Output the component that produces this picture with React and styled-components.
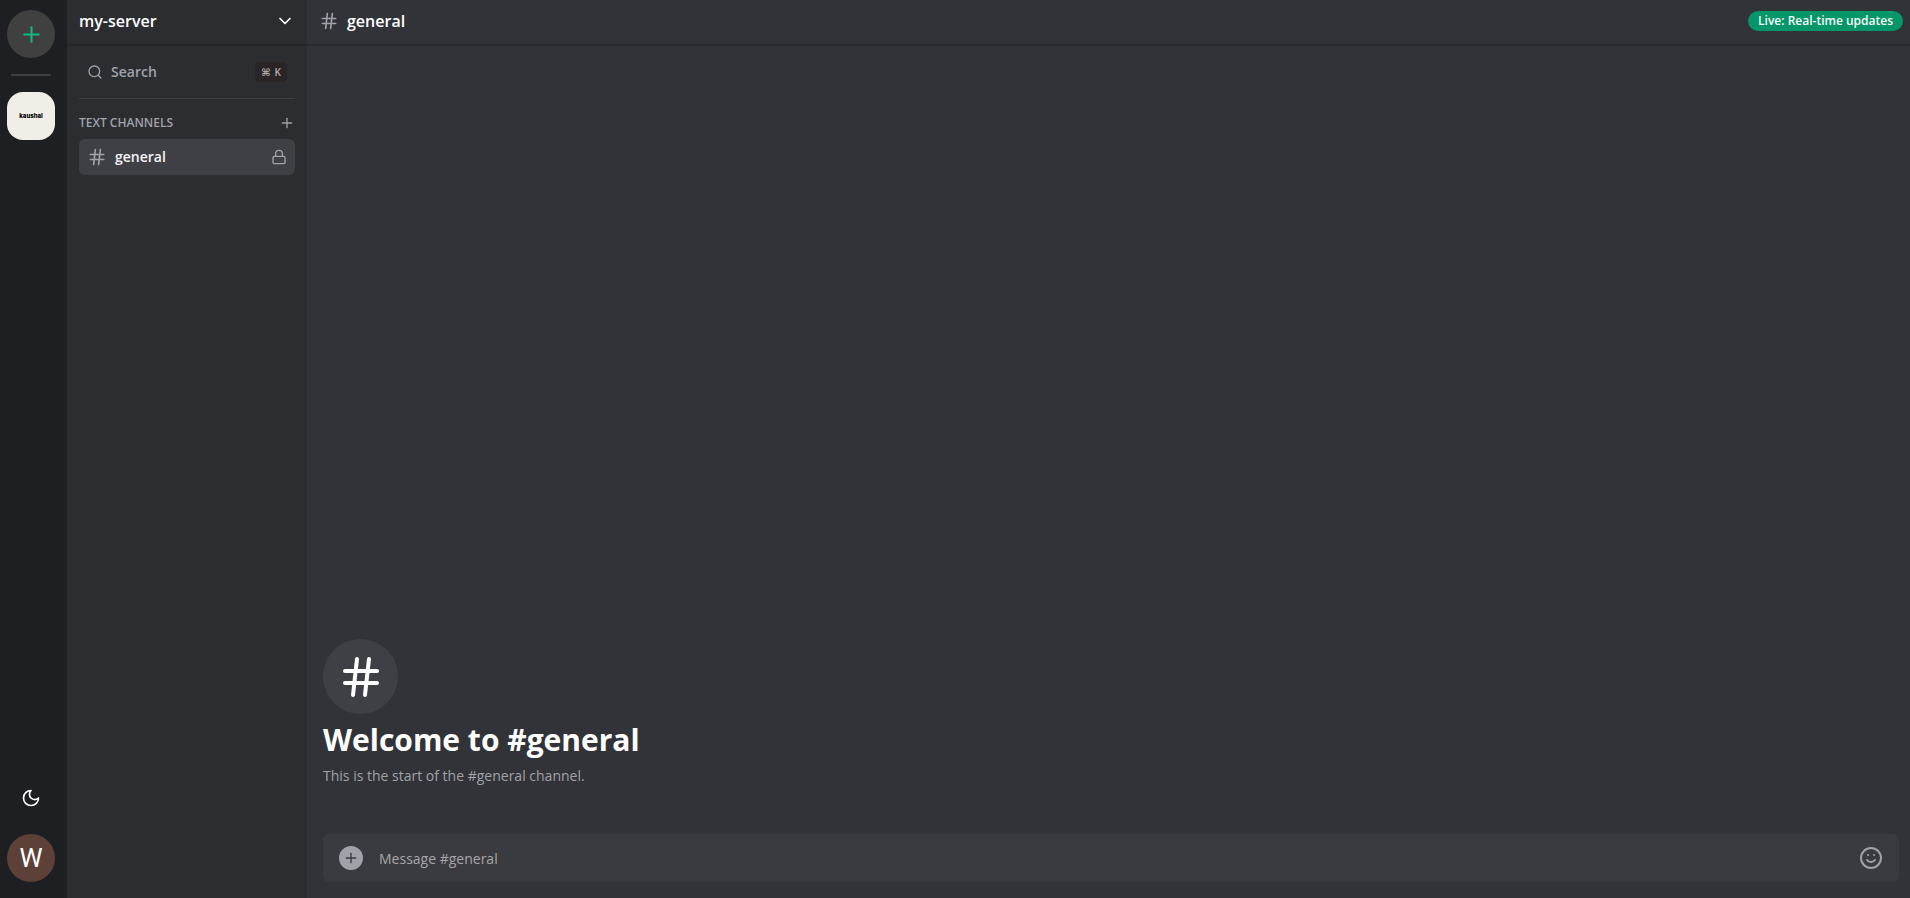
import React from "react";
import styled, { createGlobalStyle } from "styled-components";
import { ChevronDown, Hash, Lock, Plus, Search, Smile } from "lucide-react";

const GlobalStyle = createGlobalStyle`
  * {
    box-sizing: border-box;
  }

  body {
    margin: 0;
    font-family: "Open Sans", "Noto Sans", sans-serif;
    background-color: #313338;
  }

  button,
  input {
    font-family: inherit;
    border: none;
    padding: 0;
    background: none;
    outline: none;
  }

  button {
    cursor: pointer;
  }

  svg {
    display: block;
    flex-shrink: 0;
  }
`;

const Layout = styled.div`
  display: flex;
  height: 100vh;
`;

const Rail = styled.nav`
  display: flex;
  flex-direction: column;
  align-items: center;
  flex: 0 0 67px;
  padding: 10px 5px 16px 0;
  background-color: #1e1f22;
`;

const AddServer = styled.button`
  display: flex;
  align-items: center;
  justify-content: center;
  width: 48px;
  height: 48px;
  border-radius: 24px;
  background-color: #404040;
  color: #10b981;
`;

const RailDivider = styled.div`
  width: 40px;
  height: 2px;
  margin: 16px 0;
  border-radius: 1px;
  background-color: #3f3f46;
`;

const ServerIcon = styled.button`
  width: 48px;
  height: 48px;
  border-radius: 16px;
  background-color: #f0eee6;
  color: #000000;
  font-family: "Inter", sans-serif;
  font-size: 6px;
  line-height: 12px;
  font-weight: 800;
`;

const RailFooter = styled.div`
  display: flex;
  flex-direction: column;
  align-items: center;
  gap: 16px;
  margin-top: auto;
`;

const ThemeToggle = styled.button`
  display: flex;
  align-items: center;
  justify-content: center;
  width: 40px;
  height: 40px;
  color: #ffffff;
`;

const Avatar = styled.button`
  width: 48px;
  height: 48px;
  border-radius: 50%;
  background-color: #5d4037;
  color: #ffffff;
  font-family: Roboto, sans-serif;
  font-size: 26px;
  line-height: 48px;
`;

const Sidebar = styled.aside`
  flex: 0 0 240px;
  background-color: #2b2d31;
`;

const ServerHeader = styled.button`
  display: flex;
  align-items: center;
  justify-content: space-between;
  width: 100%;
  height: 46px;
  padding: 0 12px 2px;
  border-bottom: 2px solid #26272b;
  color: #ffffff;
  font-size: 16px;
  line-height: 24px;
  font-weight: 600;
`;

const SidebarBody = styled.div`
  padding: 8px 12px;
`;

const SearchButton = styled.button`
  display: flex;
  align-items: center;
  gap: 8px;
  width: 100%;
  height: 36px;
  padding: 0 8px;
  color: #a1a1aa;
  font-size: 14px;
  line-height: 20px;
  font-weight: 600;
`;

const Shortcut = styled.kbd`
  display: flex;
  align-items: center;
  gap: 4px;
  height: 20px;
  margin-left: auto;
  padding: 0 6px;
  border-radius: 4px;
  background-color: #292524;
  color: #b4b0ae;
  font-family: "Open Sans", "DejaVu Sans", sans-serif;
  font-size: 10px;
  line-height: 20px;
`;

const Separator = styled.hr`
  height: 1px;
  margin: 8px 0;
  border: none;
  background-color: #3f3f46;
`;

const SectionHeader = styled.div`
  display: flex;
  align-items: center;
  justify-content: space-between;
  height: 32px;
  color: #a1a1aa;

  button {
    color: inherit;
  }
`;

const SectionTitle = styled.h2`
  margin: 0;
  font-size: 12px;
  line-height: 16px;
  font-weight: 600;
  text-transform: uppercase;
`;

const Channel = styled.button`
  display: flex;
  align-items: center;
  gap: 8px;
  width: 100%;
  height: 36px;
  padding: 0 8px;
  border-radius: 6px;
  background-color: #3f4045;
  color: #a1a1aa;

  span {
    flex: 1;
    color: #f4f4f5;
    font-size: 14px;
    line-height: 20px;
    font-weight: 600;
    text-align: left;
  }
`;

const Main = styled.main`
  display: flex;
  flex: 1;
  flex-direction: column;
  min-width: 0;
`;

const ChannelHeader = styled.header`
  display: flex;
  align-items: center;
  gap: 8px;
  height: 46px;
  padding: 0 7px 2px 12px;
  border-bottom: 2px solid #2a2b2f;
  color: #a1a1aa;

  h1 {
    margin: 0;
    color: #ffffff;
    font-size: 16px;
    line-height: 24px;
    font-weight: 600;
  }
`;

const LiveBadge = styled.div`
  margin-left: auto;
  padding: 2px 10px;
  border-radius: 10px;
  background-color: #059669;
  color: #fafafa;
  font-size: 12px;
  line-height: 16px;
  font-weight: 600;
`;

const Welcome = styled.section`
  display: flex;
  flex: 1;
  flex-direction: column;
  justify-content: flex-end;
  padding: 0 16px 48px;

  h2 {
    margin: 8px 0;
    color: #ffffff;
    font-size: 30px;
    line-height: 36px;
    font-weight: 700;
  }

  p {
    margin: 0;
    color: #a1a1aa;
    font-size: 14px;
    line-height: 20px;
  }
`;

const WelcomeIcon = styled.div`
  display: flex;
  align-items: center;
  justify-content: center;
  width: 75px;
  height: 75px;
  border-radius: 50%;
  background-color: #3f4045;
  color: #ffffff;
`;

const Composer = styled.form`
  display: flex;
  align-items: center;
  gap: 16px;
  height: 48px;
  margin: 0 11px 16px 16px;
  padding: 0 16px;
  border-radius: 6px;
  background-color: #3a3b40;
  color: #a1a1aa;

  input {
    flex: 1;
    min-width: 0;
    padding-top: 2px;
    color: #e4e4e7;
    font-size: 14px;
    line-height: 20px;
  }

  input::placeholder {
    color: #a8a6a8;
    opacity: 1;
  }

  button {
    color: inherit;
  }
`;

const AttachButton = styled.button`
  display: flex;
  align-items: center;
  justify-content: center;
  width: 24px;
  height: 24px;
  border-radius: 50%;
  background-color: #a1a1aa;

  svg {
    color: #3a3b40;
  }
`;

const MoonIcon = () => (
  <svg
    width="20"
    height="20"
    viewBox="0 0 24 24"
    fill="none"
    stroke="currentColor"
    strokeWidth="2"
    strokeLinecap="round"
    strokeLinejoin="round"
    aria-hidden="true"
  >
    <path d="M12 3a6 6 0 0 0 9 9 9 9 0 1 1-9-9Z" />
  </svg>
);

const ServerRail = () => (
  <Rail aria-label="Servers">
    <AddServer type="button" aria-label="Add a server">
      <Plus size={25} />
    </AddServer>
    <RailDivider />
    <ServerIcon type="button">kaushal</ServerIcon>
    <RailFooter>
      <ThemeToggle type="button" aria-label="Toggle theme">
        <MoonIcon />
      </ThemeToggle>
      <Avatar type="button">W</Avatar>
    </RailFooter>
  </Rail>
);

const ServerSidebar = () => (
  <Sidebar>
    <ServerHeader type="button">
      my-server
      <ChevronDown size={20} />
    </ServerHeader>
    <SidebarBody>
      <SearchButton type="button">
        <Search size={16} />
        Search
        <Shortcut>
          <span>⌘</span>K
        </Shortcut>
      </SearchButton>
      <Separator />
      <SectionHeader>
        <SectionTitle>Text Channels</SectionTitle>
        <button type="button" aria-label="Create channel">
          <Plus size={16} />
        </button>
      </SectionHeader>
      <Channel type="button">
        <Hash size={20} />
        <span>general</span>
        <Lock size={16} />
      </Channel>
    </SidebarBody>
  </Sidebar>
);

const App = () => {
  return (
    <>
      <GlobalStyle />
      <Layout>
        <ServerRail />
        <ServerSidebar />
        <Main>
          <ChannelHeader>
            <Hash size={20} />
            <h1>general</h1>
            <LiveBadge>Live: Real-time updates</LiveBadge>
          </ChannelHeader>
          <Welcome>
            <WelcomeIcon>
              <Hash size={48} />
            </WelcomeIcon>
            <h2>Welcome to #general</h2>
            <p>This is the start of the #general channel.</p>
          </Welcome>
          <Composer onSubmit={(e) => e.preventDefault()}>
            <AttachButton type="button" aria-label="Attach a file">
              <Plus size={16} />
            </AttachButton>
            <input
              type="text"
              aria-label="Message #general"
              placeholder="Message #general"
            />
            <button type="button" aria-label="Pick an emoji">
              <Smile size={24} />
            </button>
          </Composer>
        </Main>
      </Layout>
    </>
  );
};

export default App;
